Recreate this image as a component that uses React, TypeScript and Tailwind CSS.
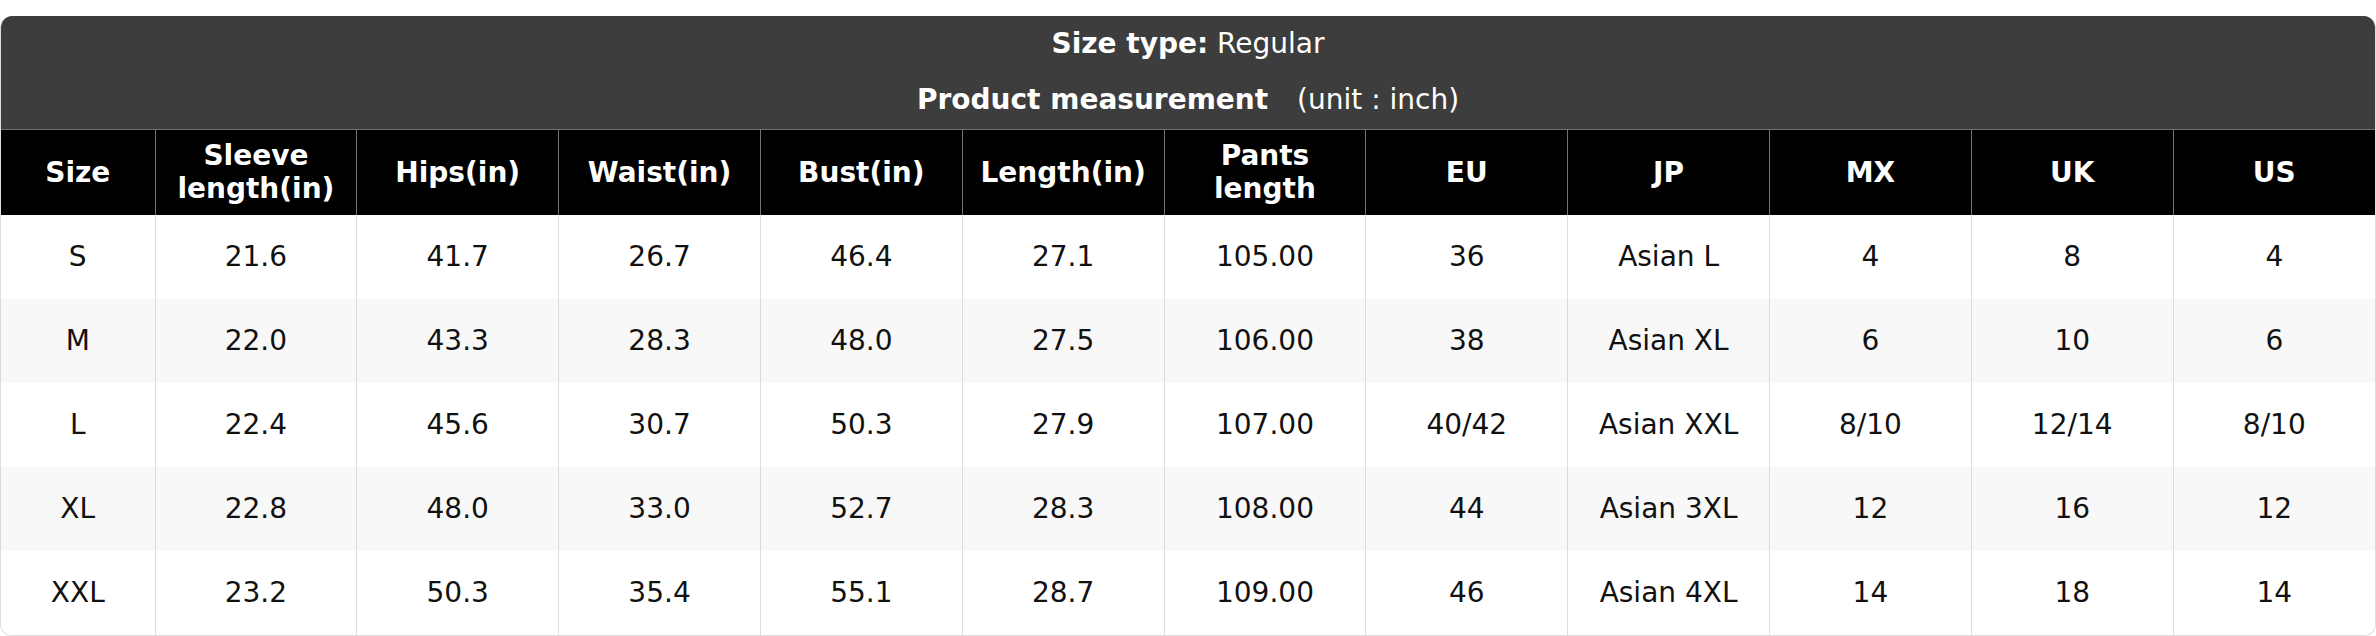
import React from "react";

const headers = [
  ["Size"],
  ["Sleeve", "length(in)"],
  ["Hips(in)"],
  ["Waist(in)"],
  ["Bust(in)"],
  ["Length(in)"],
  ["Pants", "length"],
  ["EU"],
  ["JP"],
  ["MX"],
  ["UK"],
  ["US"],
];

const rows = [
  ["S", "21.6", "41.7", "26.7", "46.4", "27.1", "105.00", "36", "Asian L", "4", "8", "4"],
  ["M", "22.0", "43.3", "28.3", "48.0", "27.5", "106.00", "38", "Asian XL", "6", "10", "6"],
  ["L", "22.4", "45.6", "30.7", "50.3", "27.9", "107.00", "40/42", "Asian XXL", "8/10", "12/14", "8/10"],
  ["XL", "22.8", "48.0", "33.0", "52.7", "28.3", "108.00", "44", "Asian 3XL", "12", "16", "12"],
  ["XXL", "23.2", "50.3", "35.4", "55.1", "28.7", "109.00", "46", "Asian 4XL", "14", "18", "14"],
];

export default function App() {
  return (
    <div className="w-[2376px] h-[636px] bg-white pt-[16px] font-['DejaVu_Sans',sans-serif]">
      <div className="rounded-[12px] overflow-hidden border border-[#dcdcdc] border-t-0">
        <div className="bg-[#3d3d3d] text-white text-center text-[28px] h-[113px] pt-[4px]">
          <div className="h-[48px] leading-[48px]">
            <span className="font-bold">Size type:</span> Regular
          </div>
          <div className="h-[48px] leading-[48px] mt-[8px]">
            <span className="font-bold">Product measurement</span>
            <span className="ml-[20px]"> (unit : inch)</span>
          </div>
        </div>
        <table className="w-full table-fixed border-collapse text-[28px]">
          <colgroup>
            <col className="w-[154px]" />
            {headers.slice(1).map((_, i) => (
              <col key={i} />
            ))}
          </colgroup>
          <thead>
            <tr className="h-[85px] bg-black text-white">
              {headers.map((h, i) => (
                <th
                  key={i}
                  className={`font-bold leading-[33px] text-center border-t border-[#737373] ${
                    i > 0 ? "border-l" : ""
                  } p-0 align-middle`}
                >
                  {h.map((l, j) => (
                    <div key={j}>{l}</div>
                  ))}
                </th>
              ))}
            </tr>
          </thead>
          <tbody>
            {rows.map((r, ri) => (
              <tr
                key={ri}
                className={`h-[84px] ${ri % 2 === 1 ? "bg-[#f8f8f8]" : "bg-white"}`}
              >
                {r.map((c, ci) => (
                  <td
                    key={ci}
                    className={`text-center text-[#111] p-0 align-middle ${
                      ci > 0 ? "border-l border-[#dcdcdc]" : ""
                    }`}
                  >
                    {c}
                  </td>
                ))}
              </tr>
            ))}
          </tbody>
        </table>
      </div>
    </div>
  );
}
